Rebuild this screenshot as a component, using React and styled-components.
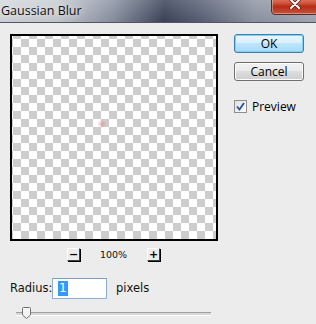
import React from "react";
import styled, { createGlobalStyle } from "styled-components";

const Global = createGlobalStyle`
  html, body { margin: 0; padding: 0; background: #ececec; }
  #root { width: 316px; height: 324px; overflow: hidden; }
`;

const Window = styled.div`
  width: 316px;
  height: 324px;
  display: flex;
  flex-direction: column;
  background: #ececec;
  font-family: "DejaVu Sans", "Liberation Sans", sans-serif;
  color: #000;
`;

const TitleBar = styled.div`
  height: 22px;
  flex-shrink: 0;
  display: flex;
  justify-content: space-between;
  align-items: flex-start;
  overflow: hidden;
  border-bottom: 1px solid #4e5668;
  background:
    linear-gradient(180deg, rgba(255,255,255,0.15), rgba(0,0,0,0.05)),
    linear-gradient(90deg, #d6d9de 0%, #c9cdd4 18%, #8a92a2 36%, #3c4459 52%, #5b6377 64%, #8e95a4 80%, #a6abb7 100%);
`;

const TitleText = styled.span`
  font-family: "Open Sans", "Liberation Sans", sans-serif;
  font-size: 12.5px;
  line-height: 22px;
  padding-left: 1px;
  color: #111;
  text-shadow: 0 0 6px rgba(255,255,255,0.9);
`;

const CloseButton = styled.div`
  width: 46px;
  height: 20px;
  margin-right: -3px;
  margin-top: -7px;
  border: 1px solid #5a2a22;
  border-radius: 0 0 4px 4px;
  background: linear-gradient(180deg, #e8a493 0%, #d2553d 45%, #b42d17 62%, #c9523a 100%);
  display: flex;
  align-items: center;
  justify-content: center;
  box-shadow: inset 0 0 0 1px rgba(255,255,255,0.35);
`;

const Body = styled.div`
  display: flex;
  flex: 1;
`;

const LeftColumn = styled.div`
  width: 208px;
  padding: 11px 0 0 10px;
  display: flex;
  flex-direction: column;
`;

const PreviewBox = styled.div`
  width: 204px;
  height: 203px;
  border: 2px solid #000;
  display: flex;
  align-items: flex-start;
  background:
    conic-gradient(#fff 0 25%, #cdcdcd 0 50%, #fff 0 75%, #cdcdcd 0) 1px -5px / 16px 16px;
`;

const Dot = styled.div`
  width: 10px;
  height: 8px;
  margin: 84px 0 0 85px;
  border-radius: 50%;
  background: radial-gradient(closest-side, rgba(230,140,150,0.7), rgba(240,180,185,0));
`;

const ZoomRow = styled.div`
  height: 14px;
  margin-top: 6px;
  display: flex;
  align-items: center;
  padding-left: 57px;
`;

const ZoomButton = styled.div`
  width: 13px;
  height: 13px;
  box-sizing: border-box;
  border-top: 1px solid #fff;
  border-left: 1px solid #fff;
  border-right: 1px solid #404040;
  border-bottom: 1px solid #404040;
  box-shadow: 1px 1px 0 #000;
  background: #ececec;
  display: flex;
  align-items: center;
  justify-content: center;
  font-size: 11px;
  line-height: 1;
  font-weight: bold;
`;

const ZoomLabel = styled.span`
  width: 67px;
  text-align: center;
  font-family: "DejaVu Sans", sans-serif;
  font-size: 9.5px;
  color: #111;
`;

const RadiusRow = styled.div`
  display: flex;
  align-items: center;
  margin-top: 16px;
  height: 22px;
`;

const Label = styled.span`
  font-family: "DejaVu Sans", sans-serif;
  font-size: 11.5px;
  color: #111;
  width: 42px;
`;

const Field = styled.div`
  width: 48px;
  height: 19px;
  border: 1px solid #8fb0d6;
  border-top-color: #7a9cc5;
  background: #fff;
  display: flex;
  align-items: center;
  padding-left: 5px;
`;

const Selected = styled.span`
  background: #3399ff;
  color: #fff;
  font-size: 12px;
  line-height: 15px;
  padding: 0 1px;
`;

const Unit = styled.span`
  font-family: "DejaVu Sans", sans-serif;
  font-size: 11.5px;
  color: #111;
  margin-left: 9px;
`;

const SliderRow = styled.div`
  margin-top: 8px;
  padding-left: 6px;
  height: 13px;
  display: flex;
  align-items: center;
`;

const Track = styled.div`
  width: 195px;
  height: 2px;
  border-top: 1px solid #a0a0a0;
  border-bottom: 1px solid #fff;
  background: #d8d8d8;
  display: flex;
  align-items: center;
`;

const RightColumn = styled.div`
  padding: 11px 0 0 16px;
  display: flex;
  flex-direction: column;
`;

const Button = styled.div`
  width: 68px;
  height: 17px;
  border: 1px solid ${(p) => (p.$primary ? "#3c7fb1" : "#707070")};
  border-radius: 3px;
  background: ${(p) =>
    p.$primary
      ? "linear-gradient(180deg, #eaf6fd 0%, #d9f0fc 45%, #bee6fd 50%, #a7d9f5 100%)"
      : "linear-gradient(180deg, #f2f2f2 0%, #ebebeb 45%, #dddddd 50%, #cfcfcf 100%)"};
  box-shadow: inset 0 0 0 1px ${(p) => (p.$primary ? "#7fd0f5" : "#fcfcfc")};
  display: flex;
  align-items: center;
  justify-content: center;
  font-family: "Open Sans", "Liberation Sans", sans-serif;
  font-size: 12px;
  color: #000;
  margin-bottom: ${(p) => p.$gap}px;
`;

const CheckRow = styled.label`
  display: flex;
  align-items: center;
  gap: 5px;
  font-family: "Open Sans", "Liberation Sans", sans-serif;
  font-size: 12px;
`;

const CheckBox = styled.span`
  width: 11px;
  height: 11px;
  border: 1px solid #8e8f8f;
  background: linear-gradient(135deg, #e0e0e0, #fcfcfc);
  display: flex;
  align-items: center;
  justify-content: center;
`;

export default function App() {
  return (
    <>
      <Global />
      <Window>
        <TitleBar>
          <TitleText>Gaussian Blur</TitleText>
          <CloseButton>
            <svg width="12" height="10" viewBox="0 0 12 10">
              <path d="M2 1 L10 9 M10 1 L2 9" stroke="#5a1a10" strokeWidth="3.4" strokeLinecap="round" />
              <path d="M2 1 L10 9 M10 1 L2 9" stroke="#fff" strokeWidth="2" strokeLinecap="round" />
            </svg>
          </CloseButton>
        </TitleBar>
        <Body>
          <LeftColumn>
            <PreviewBox>
              <Dot />
            </PreviewBox>
            <ZoomRow>
              <ZoomButton>−</ZoomButton>
              <ZoomLabel>100%</ZoomLabel>
              <ZoomButton>+</ZoomButton>
            </ZoomRow>
            <RadiusRow>
              <Label>Radius:</Label>
              <Field>
                <Selected>1</Selected>
              </Field>
              <Unit>pixels</Unit>
            </RadiusRow>
            <SliderRow>
              <Track>
                <svg width="14" height="12" viewBox="0 0 14 12" style={{ marginLeft: 5, marginTop: -1 }}>
                  <path d="M2.5 0.5 H8.5 Q9.5 0.5 9.5 1.5 V8 L5.5 11.5 L1.5 8 V1.5 Q1.5 0.5 2.5 0.5 Z" fill="#f4f4f4" stroke="#707070" />
                </svg>
              </Track>
            </SliderRow>
          </LeftColumn>
          <RightColumn>
            <Button $primary $gap={9}>OK</Button>
            <Button $gap={17}>Cancel</Button>
            <CheckRow>
              <CheckBox>
                <svg width="9" height="9" viewBox="0 0 9 9">
                  <path d="M1 4.5 L3.5 7.5 L8 1" fill="none" stroke="#2a4f9a" strokeWidth="1.8" />
                </svg>
              </CheckBox>
              Preview
            </CheckRow>
          </RightColumn>
        </Body>
      </Window>
    </>
  );
}
